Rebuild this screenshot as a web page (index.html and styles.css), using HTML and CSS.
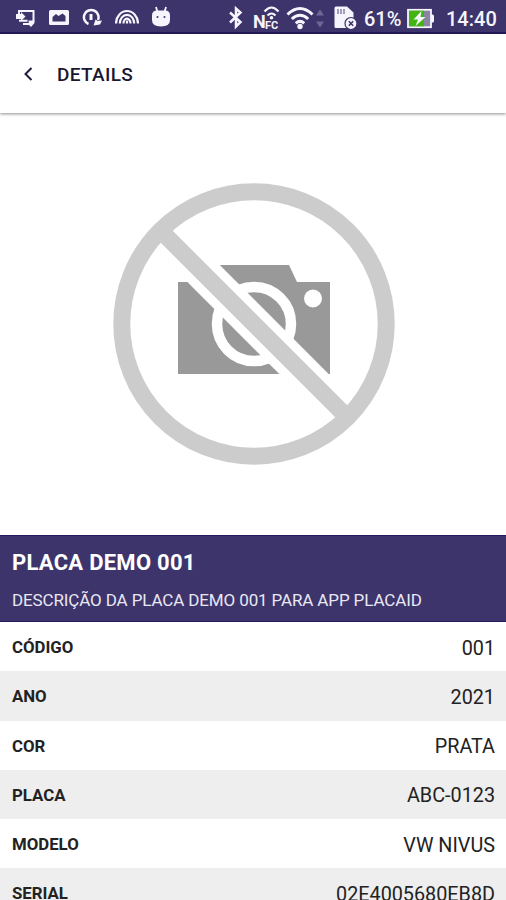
FILE: index.html
```html
<!DOCTYPE html>
<html lang="pt-BR">
<head>
    <meta charset="UTF-8">
    <meta name="viewport" content="width=device-width, initial-scale=1.0">
    <title>Details</title>
    <link rel="stylesheet" href="styles.css">
</head>
<body>
    <div class="status-bar">
        <div class="status-left">
            <!-- screen cast -->
            <svg width="20" height="34" viewBox="0 0 20 34" fill="none" stroke="currentColor" stroke-width="2">
                <path d="M3 14V11H17.500V21"/>
                <path d="M0 14h5v-2l4.500 4.500-4.500 4.500v-2H0z" fill="currentColor" stroke="none"/>
                <path d="M3 20.800h8.500M7 24h6"/>
                <path d="M12.500 20.500h6v2.500l-3.500 4-2-2z" fill="currentColor" stroke="none"/>
            </svg>
            <!-- picture -->
            <svg width="20" height="34" viewBox="0 0 20 34" fill="currentColor">
                <path fill-rule="evenodd" d="M1.500 10h17a1.500 1.500 0 0 1 1.500 1.500v12a1.500 1.500 0 0 1-1.500 1.500h-17A1.500 1.500 0 0 1 0 23.500v-12A1.500 1.500 0 0 1 1.500 10zM3.500 21.500h13V16l-3-2.500-4 2.500-2.500-2-3.500 3z"/>
            </svg>
            <!-- sync -->
            <svg width="20" height="34" viewBox="0 0 20 34" fill="none" stroke="currentColor" stroke-width="2.500">
                <path d="M6.500 24A7.300 7.300 0 1 1 16 20"/>
                <path d="M11.500 25.500l2-6 2.500 1.500 4-.500-2 4z" fill="currentColor" stroke="none"/>
                <path d="M9 14v6" stroke-width="3"/>
            </svg>
            <!-- rainbow -->
            <svg width="24" height="34" viewBox="0 0 24 34" fill="none" stroke="currentColor" stroke-width="2.200">
                <path d="M1 23.500a11 12.500 0 0 1 22 0M4.800 23.500a7.200 8.700 0 0 1 14.400 0M8.500 23.500a3.500 4.800 0 0 1 7 0"/>
                <path d="M12 20.500v3"/>
            </svg>
            <!-- android head -->
            <svg width="18" height="34" viewBox="0 0 18 34" fill="currentColor">
                <path d="M4 7l1.500 5M14 7l-1.500 5" stroke="currentColor" stroke-width="1.800"/>
                <path d="M0 15.500q0-5 5-5h8q5 0 5 5V20q0 6.500-9 6.500T0 20z"/>
                <circle cx="5.500" cy="17" r="1" class="cut"/>
                <circle cx="12.500" cy="17" r="1" class="cut"/>
            </svg>
        </div>
        <div class="status-right">
            <!-- bluetooth -->
            <svg width="14" height="34" viewBox="0 0 14 34" fill="none" stroke="currentColor" stroke-width="2.500">
                <path d="M1 12.500l10.500 9.500-4.500 4.500V8.500l4.500 4L1 22.500"/>
            </svg>
            <!-- nfc -->
            <svg class="nfc" width="28" height="34" viewBox="0 0 28 34">
                <text x="0" y="28" class="nfc-n">N</text>
                <text x="12" y="29" class="nfc-fc">FC</text>
                <g fill="none" stroke="currentColor" stroke-width="2.200">
                    <path d="M11.500 11.500q7-8 14 0M14.500 15.500q4-4 8 0"/>
                </g>
                <circle cx="18.500" cy="17.800" r="1.800" fill="currentColor"/>
            </svg>
            <!-- wifi -->
            <svg class="wifi" width="28" height="34" viewBox="0 0 28 34" fill="none" stroke="currentColor" stroke-width="3">
                <path d="M1.500 14.500q12.500-12 25 0M5.800 19q8.200-7.500 16.400 0M9.800 23.300q4.200-3.800 8.400 0"/>
                <circle cx="14" cy="26.500" r="2.700" fill="currentColor" stroke="none"/>
            </svg>
            <svg class="traffic" width="8" height="34" viewBox="0 0 8 34">
                <path d="M0 15.500L4 9.500l4 6zM0 21.500h8l-4 6z"/>
            </svg>
            <!-- sd card -->
            <svg class="sd-card" width="23" height="34" viewBox="0 0 23 34" fill="currentColor">
                <path d="M2 6.500H13l6.500 6V28H2A1.500 1.500 0 0 1 .500 26.500V8A1.500 1.500 0 0 1 2 6.500z"/>
                <path class="cut-line" d="M4 9v5M7 9v5M10 9v5"/>
                <circle class="ring" cx="17" cy="23.500" r="6"/>
                <path class="cross" d="M14.800 21.300l4.400 4.400M19.200 21.300l-4.400 4.400"/>
            </svg>
            <span class="percent">61%</span>
            <!-- battery -->
            <svg class="battery" width="27" height="34" viewBox="0 0 27 34">
                <path d="M23 14.500h2.500a1.500 1.500 0 0 1 1.500 1.500v5a1.500 1.500 0 0 1-1.500 1.500H23z" fill="currentColor"/>
                <rect x="1" y="9.800" width="23" height="17.400" fill="#8984a2" stroke="currentColor" stroke-width="1.800"/>
                <rect x="2" y="10.700" width="15" height="15.600" fill="#43b512"/>
                <path d="M14.500 11L6.500 19.500h4.500L8.500 26l10-9h-5z" fill="currentColor"/>
            </svg>
            <span class="clock">14:40</span>
        </div>
    </div>

    <header class="header">
        <button class="back" aria-label="Back">
            <svg width="10" height="14" viewBox="0 0 10 14" fill="none" stroke="currentColor" stroke-width="2">
                <path d="M8.500 1l-6 6 6 6"/>
            </svg>
        </button>
        <h1>DETAILS</h1>
    </header>

    <div class="photo">
        <svg width="282" height="282" viewBox="0 0 282 282">
            <path class="camera" d="M65 99h38V82h73l8 17h33v92H65z"/>
            <circle class="lens" cx="141" cy="141" r="37"/>
            <circle class="flash" cx="200" cy="115.500" r="9"/>
            <path class="gap" d="M68 68l155 155"/>
            <path class="slash" d="M51 51l180 180"/>
            <circle class="circle" cx="141" cy="141" r="132.200"/>
        </svg>
    </div>

    <div class="title">
        <h2>PLACA DEMO 001</h2>
        <p>DESCRIÇÃO DA PLACA DEMO 001 PARA APP PLACAID</p>
    </div>

    <ul class="details">
        <li><span class="label">CÓDIGO</span><span class="value">001</span></li>
        <li><span class="label">ANO</span><span class="value">2021</span></li>
        <li><span class="label">COR</span><span class="value">PRATA</span></li>
        <li><span class="label">PLACA</span><span class="value">ABC-0123</span></li>
        <li><span class="label">MODELO</span><span class="value">VW NIVUS</span></li>
        <li><span class="label">SERIAL</span><span class="value">02E4005680EB8D</span></li>
    </ul>
</body>
</html>
```
FILE: styles.css
```css
* {
    box-sizing: border-box;
}
body {
    font-family: Roboto, sans-serif;
    margin: 0;
    height: 900px;
    overflow: hidden;
    background-color: #fff;
    color: #222;
}
svg {
    display: block;
    flex: none;
}
.status-bar {
    display: flex;
    justify-content: space-between;
    height: 34px;
    padding: 0 10px 0 16px;
    background: #3d346b;
    border-bottom: 2px solid #241a5c;
    color: #f6f4fc;
}
.status-left,
.status-right {
    display: flex;
    height: 34px;
}
.status-left {
    gap: 13px;
}
.cut {
    fill: #3d346b;
}
.nfc {
    margin-left: 10px;
}
.nfc-n {
    font-size: 18px;
    font-weight: 700;
    fill: currentColor;
}
.nfc-fc {
    font-size: 11px;
    font-weight: 700;
    fill: currentColor;
}
.wifi {
    margin-left: 5px;
}
.traffic {
    margin-left: 2px;
    fill: #6f6896;
}
.sd-card {
    margin-left: 10px;
}
.cut-line {
    stroke: #8580a6;
    stroke-width: 1.5;
}
.ring {
    fill: #f6f4fc;
    stroke: #3d346b;
    stroke-width: 1.2;
}
.cross {
    stroke: #3d346b;
    stroke-width: 1.6;
}
.percent,
.clock {
    font-size: 20px;
    font-weight: 500;
    line-height: 38px;
    white-space: nowrap;
}
.percent {
    width: 38px;
    margin-left: 7px;
}
.battery {
    margin-left: 5px;
}
.clock {
    width: 50px;
    margin-left: 12px;
}
.header {
    display: flex;
    align-items: center;
    height: 79px;
    padding-left: 23px;
    background: #fff;
    box-shadow: 0 1px 3px rgba(0, 0, 0, 0.45);
}
.back {
    padding: 0;
    border: none;
    background: none;
    color: #1f1b3a;
}
.header h1 {
    margin: 2px 0 0 24px;
    font-size: 19px;
    font-weight: 500;
    letter-spacing: 0.35px;
    color: #1b1730;
}
.photo {
    display: flex;
    justify-content: center;
    height: 422px;
    padding: 70px 0 0 2px;
}
.camera {
    fill: #999;
}
.lens {
    fill: none;
    stroke: #fff;
    stroke-width: 10.5;
}
.flash {
    fill: #fff;
}
.gap {
    stroke: #fff;
    stroke-width: 35;
}
.slash {
    stroke: #ccc;
    stroke-width: 17;
}
.circle {
    fill: none;
    stroke: #ccc;
    stroke-width: 17;
}
.title {
    height: 87px;
    padding: 14px 12px 0;
    background: #3d346b;
    border-top: 1px solid #241a5c;
    border-bottom: 1px solid #241a5c;
    color: #fff;
}
.title h2 {
    margin: 0;
    font-size: 22px;
    font-weight: 700;
    line-height: 26px;
    letter-spacing: 0.27px;
}
.title p {
    margin: 13px 0 0;
    font-size: 17px;
    line-height: 22px;
    letter-spacing: -0.13px;
    color: #e9e7f2;
    white-space: nowrap;
}
.details {
    margin: 0;
    padding: 0;
    list-style-type: none;
}
.details li {
    display: flex;
    justify-content: space-between;
    align-items: center;
    height: 49.25px;
    padding: 1px 11px 0 12px;
}
.details li:nth-child(even) {
    background: #eee;
}
.label {
    font-size: 16.8px;
    font-weight: 700;
}
.value {
    padding-top: 2px;
    font-size: 19.8px;
}
```
